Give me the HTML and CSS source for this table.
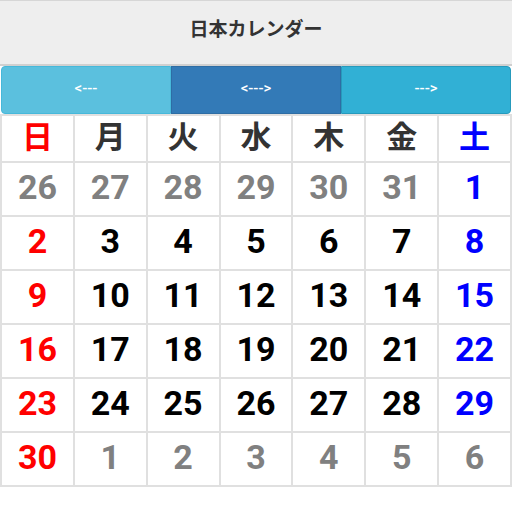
FILE: index.html
```html
<!DOCTYPE html>
<html lang="ja">
<head>
<meta charset="utf-8">
<title>日本カレンダー</title>
<link rel="stylesheet" href="styles.css">
</head>
<body>
<header class="bar">
  <h1 class="title">日本カレンダー</h1>
</header>
<nav class="btn-group">
  <button class="btn btn-prev">&lt;---</button>
  <button class="btn btn-today">&lt;---&gt;</button>
  <button class="btn btn-next">---&gt;</button>
</nav>
<table class="cal">
  <thead>
    <tr>
      <th class="sun">日</th><th>月</th><th>火</th><th>水</th><th>木</th><th>金</th><th class="sat">土</th>
    </tr>
  </thead>
  <tbody>
    <tr><td class="other">26</td><td class="other">27</td><td class="other">28</td><td class="other">29</td><td class="other">30</td><td class="other">31</td><td class="sat">1</td></tr>
    <tr><td class="sun">2</td><td>3</td><td>4</td><td>5</td><td>6</td><td>7</td><td class="sat">8</td></tr>
    <tr><td class="sun">9</td><td>10</td><td>11</td><td>12</td><td>13</td><td>14</td><td class="sat">15</td></tr>
    <tr><td class="sun">16</td><td>17</td><td>18</td><td>19</td><td>20</td><td>21</td><td class="sat">22</td></tr>
    <tr><td class="sun">23</td><td>24</td><td>25</td><td>26</td><td>27</td><td>28</td><td class="sat">29</td></tr>
    <tr><td class="sun">30</td><td class="other">1</td><td class="other">2</td><td class="other">3</td><td class="other">4</td><td class="other">5</td><td class="other">6</td></tr>
  </tbody>
</table>
</body>
</html>
```

FILE: styles.css
```css
html, body {
  margin: 0;
  padding: 0;
  background: #fff;
}
body {
  font-family: Roboto, "Noto Sans CJK JP", sans-serif;
  width: 512px;
}
.bar {
  box-sizing: border-box;
  height: 66px;
  background: #eeeeee;
  border-top: 1px solid #d6d6d6;
  border-bottom: 2px solid #d0d0d0;
  display: flex;
  align-items: center;
  justify-content: center;
}
.title {
  margin: 0 0 10px 0;
  font-family: "Noto Sans CJK JP", sans-serif;
  font-size: 19px;
  font-weight: bold;
  color: #333;
}
.btn-group {
  display: flex;
  height: 48px;
  padding: 0 1px;
  box-sizing: border-box;
}
.btn {
  flex: 1 1 0;
  margin: 0;
  border: 1px solid transparent;
  color: #fff;
  font-family: Roboto, sans-serif;
  font-size: 15px;
  font-weight: 500;
  padding: 0 0 4px 0;
  cursor: pointer;
}
.btn-prev {
  background: #5bc0de;
  border-color: #46b8da;
  border-radius: 4px 0 0 4px;
}
.btn-today {
  background: #337ab7;
  border-color: #2e6da4;
}
.btn-next {
  background: #31b0d5;
  border-color: #269abc;
  border-radius: 0 4px 4px 0;
}
.cal {
  width: 512px;
  table-layout: fixed;
  border-collapse: collapse;
}
.cal th, .cal td {
  border: 2px solid #e0e0e0;
  text-align: center;
  padding: 0;
  font-weight: bold;
}
.cal th {
  height: 37px;
  font-family: "Noto Sans CJK JP", sans-serif;
  font-size: 31px;
  color: #333;
  line-height: 1;
  padding-bottom: 8px;
}
.cal td {
  height: 48px;
  padding-bottom: 4px;
  font-family: Roboto, sans-serif;
  font-size: 34px;
  color: #000;
}
.cal .sun { color: #f00; }
.cal .sat { color: #00f; }
.cal .other { color: #808080; }
```
